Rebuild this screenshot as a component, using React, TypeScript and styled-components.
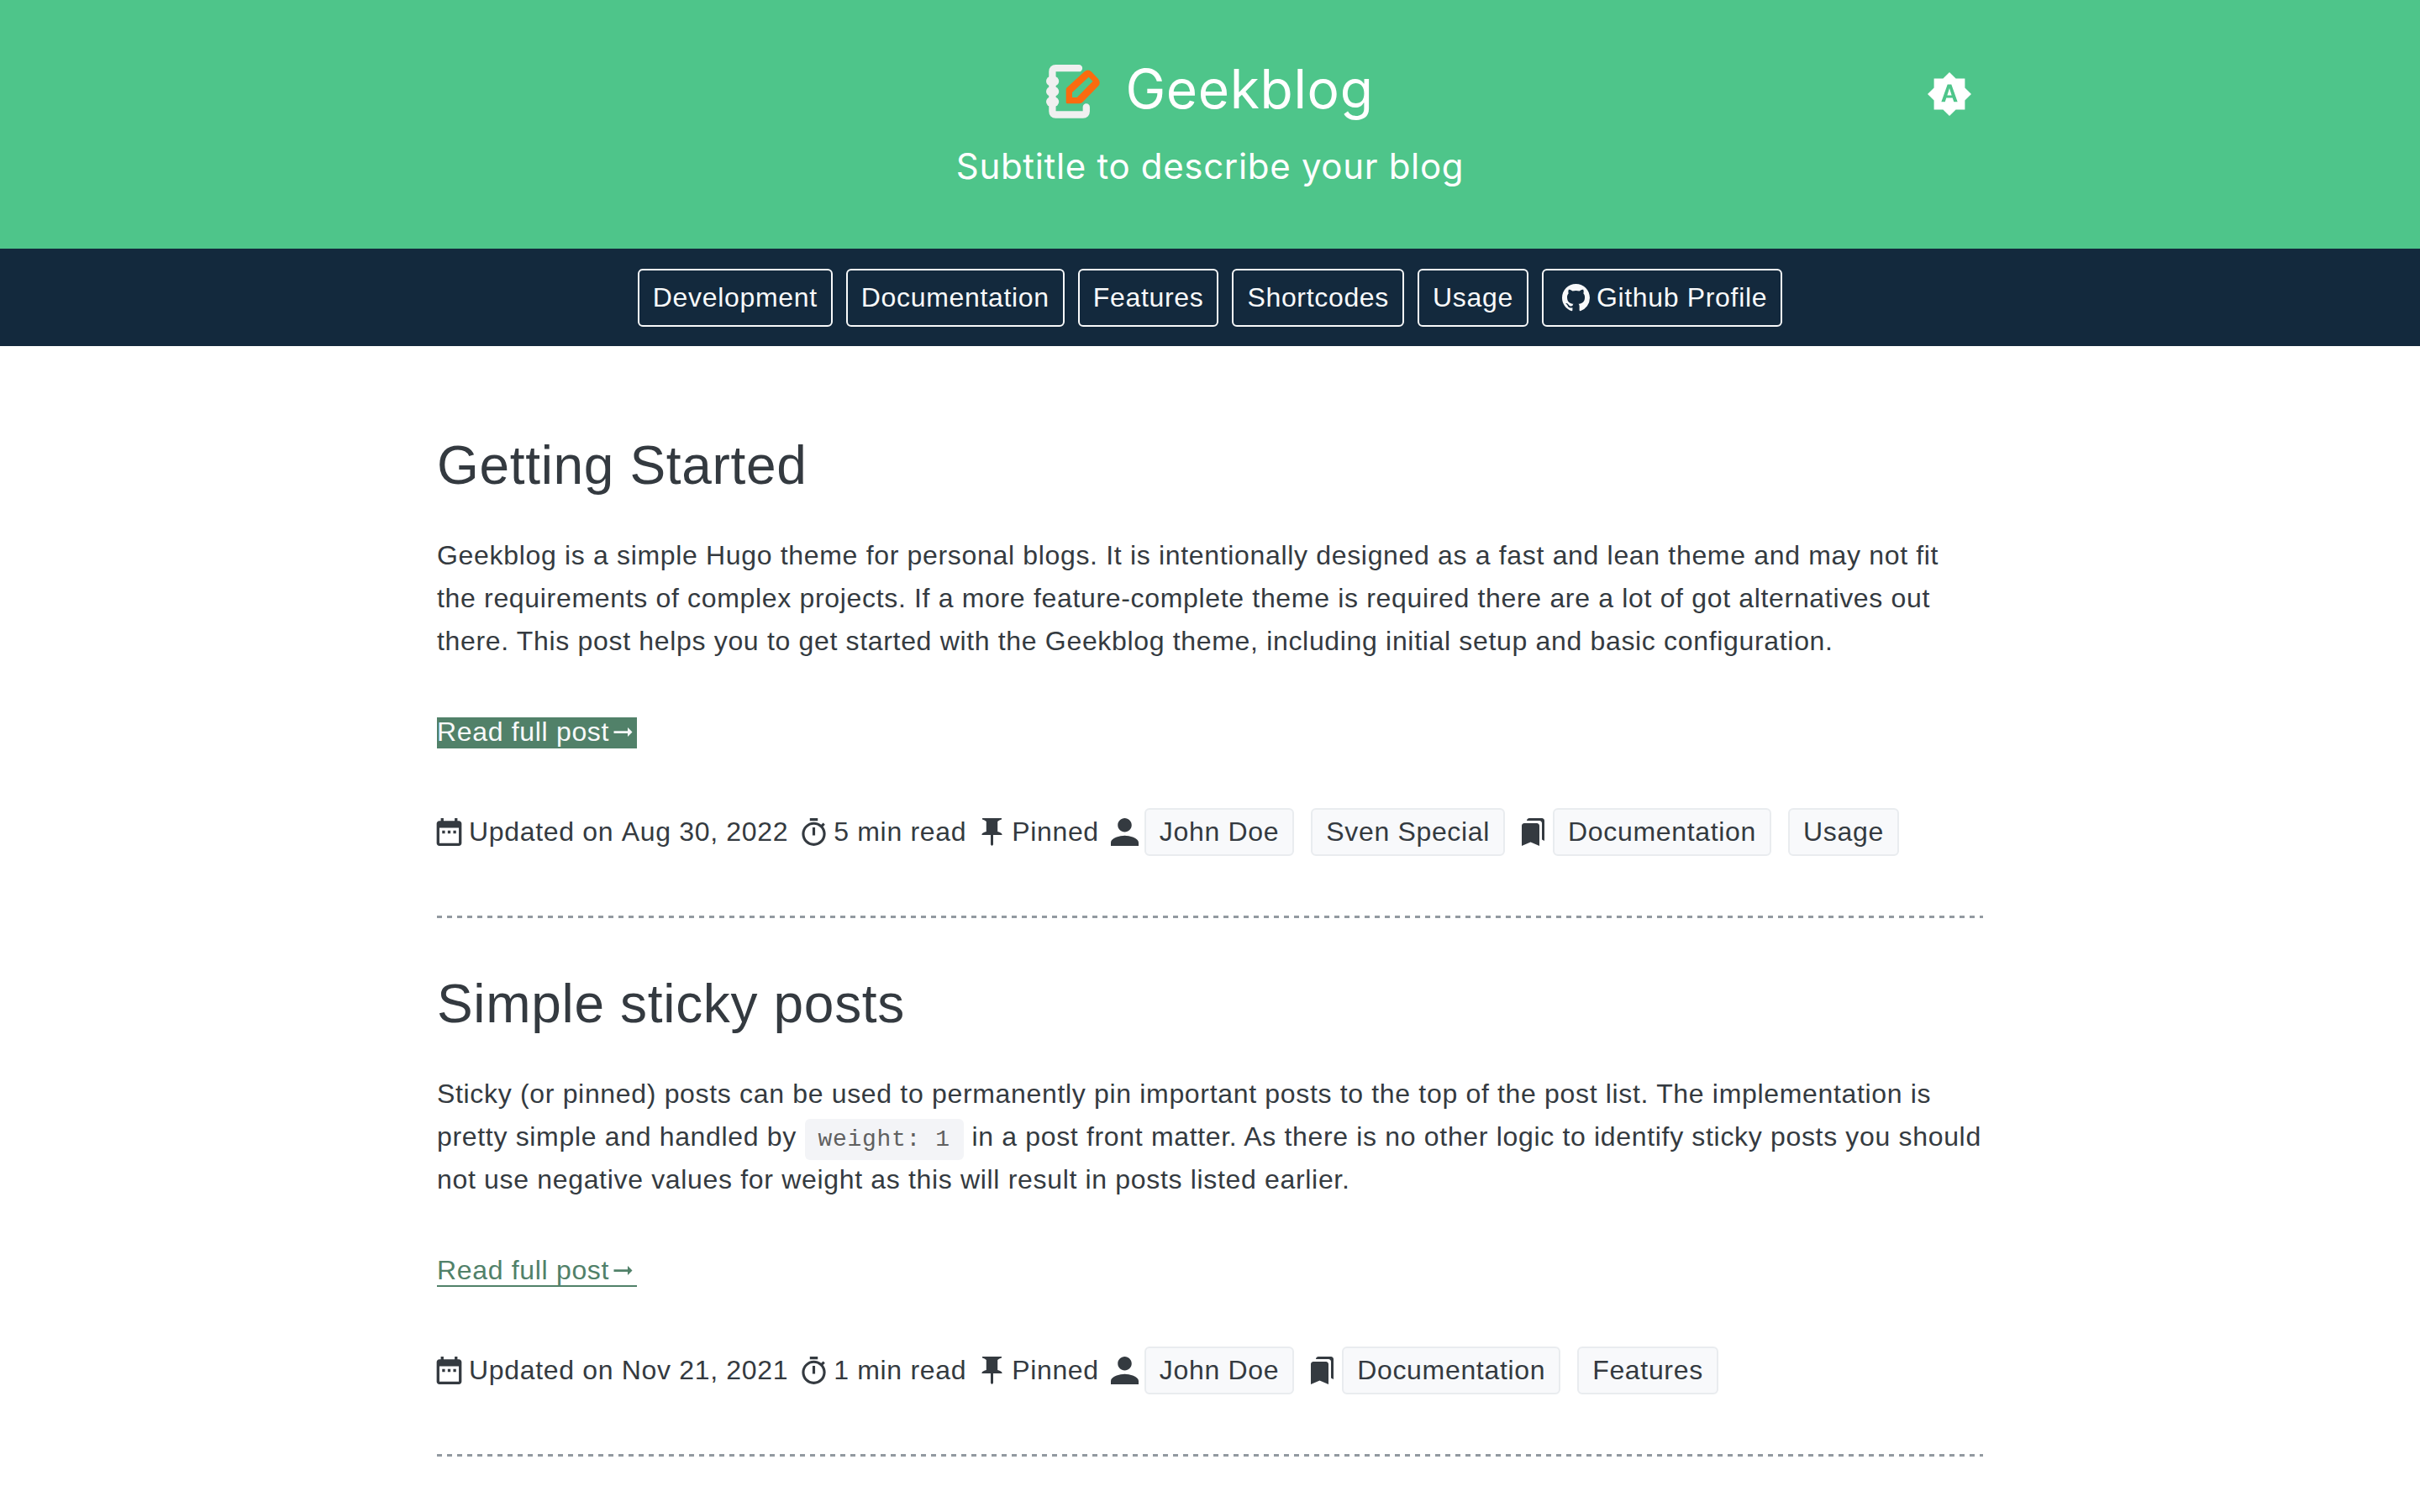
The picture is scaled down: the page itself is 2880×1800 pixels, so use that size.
import React from 'react';
import styled, { createGlobalStyle } from 'styled-components';

const GlobalStyle = createGlobalStyle`
  *, *::before, *::after { box-sizing: border-box; }
  body {
    margin: 0;
    background: #fff;
    color: #343a40;
    font-family: "Liberation Sans", Arial, sans-serif;
    font-size: 32px;
    line-height: 51px;
    letter-spacing: 0.021em;
  }
`;

const Header = styled.header`
  background: #4ec58a;
  color: #fff;
`;

const HeaderInner = styled.div`
  display: grid;
  grid-template-columns: 1fr auto 1fr;
  align-items: center;
  row-gap: 16px;
  width: 100%;
  max-width: 1904px;
  margin: 0 auto;
  padding: 64px 32px 70px;
`;

const BrandLink = styled.a`
  grid-column: 2;
  justify-self: center;
  display: flex;
  align-items: center;
  gap: 30px;
  color: #fff;
  text-decoration: none;
`;

const BrandName = styled.span`
  padding-bottom: 6px;
  font-family: Inter, "Open Sans", sans-serif;
  font-size: 64px;
  font-weight: 400;
  line-height: 84px;
`;

const Logo = styled.svg`
  display: block;
  flex: none;
  width: 64px;
  height: 64px;
`;

const Subtitle = styled.span`
  grid-column: 1 / -1;
  justify-self: center;
  font-family: Inter, "Open Sans", sans-serif;
  font-size: 42px;
  line-height: 56px;
`;

const ThemeToggle = styled.button`
  justify-self: end;
  display: flex;
  margin: 6px 14px 0 0;
  border: 0;
  padding: 0;
  background: none;
  color: #fff;
  cursor: pointer;
`;

const Nav = styled.nav`
  background: #13293d;
  padding: 24px 32px 23px;
`;

const NavList = styled.ul`
  display: flex;
  flex-wrap: wrap;
  justify-content: center;
  gap: 16px;
  margin: 0;
  padding: 0;
  list-style: none;
`;

const NavLink = styled.a`
  display: flex;
  align-items: center;
  border: 2px solid #f8f9fa;
  border-radius: 6px;
  padding: 7px 16px;
  color: #f8f9fa;
  text-decoration: none;

  svg {
    margin: 0 8px 0 6px;
  }
`;

const Main = styled.main`
  width: 100%;
  max-width: 1904px;
  margin: 0 auto;
  padding: 101px 32px 0;
`;

const Post = styled.article`
  margin-bottom: 61px;
`;

const Divider = styled.hr`
  height: 3px;
  margin: 71px 0 0;
  border: 0;
  background: repeating-linear-gradient(90deg, #9299a0 0 6px, transparent 6px 12px);
`;

const Title = styled.h1`
  margin: 0 0 41px;
  font-size: 64px;
  font-weight: 400;
  line-height: 82px;
`;

const Text = styled.p`
  margin: 0 0 57px;
`;

const Code = styled.code`
  border-radius: 6px;
  padding: 9px 16px;
  background: #f3f4f7;
  color: #606060;
  font-family: "Liberation Mono", monospace;
  font-size: 28px;
  line-height: 32px;
`;

const ReadMore = styled.p`
  margin: 0 0 65px;
`;

const ReadLink = styled.a<{ $active?: boolean }>`
  display: inline-flex;
  align-items: center;
  border-bottom: 2px solid #518169;
  background: ${(p) => (p.$active ? '#518169' : 'transparent')};
  color: ${(p) => (p.$active ? '#f8f9fa' : '#518169')};
  line-height: 35px;
  text-decoration: none;
`;

const Meta = styled.footer`
  display: flex;
  flex-wrap: wrap;
  align-items: center;
  gap: 14px;
  margin-left: -2px;
`;

const MetaItem = styled.span`
  display: flex;
  align-items: center;
  gap: 7px;
`;

const PostDate = styled.time`
  display: inline-block;
`;

const Tags = styled.span`
  display: flex;
  gap: 20px;
  padding-right: 3px;
`;

const Tag = styled.a`
  border: 2px solid #e9ecef;
  border-radius: 6px;
  padding: 1px 16px;
  background: #f8f9fb;
  color: #343a40;
  text-decoration: none;
`;

const Glyph = styled.svg<{ $size?: number }>`
  display: block;
  flex: none;
  width: ${(p) => p.$size ?? 33}px;
  height: ${(p) => p.$size ?? 33}px;
  fill: currentColor;
`;

const icons = {
  date: {
    box: '2 2 20 20',
    d: 'M9 11H7v2h2v-2zm4 0h-2v2h2v-2zm4 0h-2v2h2v-2zm2-7h-1V2h-2v2H8V2H6v2H5c-1.11 0-1.99.9-1.99 2L3 20c0 1.1.89 2 2 2h14c1.1 0 2-.9 2-2V6c0-1.1-.9-2-2-2zm0 16H5V9h14v11z',
  },
  timer: {
    box: '1.5 1 21 21',
    d: 'M15 1H9v2h6V1zm-4 13h2V8h-2v6zm8.03-6.61l1.42-1.42c-.43-.51-.9-.99-1.41-1.41l-1.42 1.42C16.07 4.74 14.12 4 12 4c-4.97 0-9 4.03-9 9s4.02 9 9 9 9-4.03 9-9c0-2.12-.74-4.07-1.97-5.61zM12 20c-3.87 0-7-3.13-7-7s3.13-7 7-7 7 3.13 7 7-3.13 7-7 7z',
  },
  pin: {
    box: '-4.5 0 33 33',
    d: 'M.5 0H23.5V1.5C21.5 2 20 3 18.7 4V16C21 16.5 23.5 17.5 24 19V20H13.5V31.5L12 33L10.5 31.5V20H0V19C.5 17.5 3 16.5 5.3 16V4C4 3 2.5 2 .5 1.5Z',
  },
  person: {
    box: '4 4 16 16',
    d: 'M12 12c2.21 0 4-1.79 4-4s-1.79-4-4-4-4 1.79-4 4 1.79 4 4 4zm0 2c-2.67 0-8 1.34-8 4v2h16v-2c0-2.66-5.33-4-8-4z',
  },
  bookmarks: {
    box: '1 1 22 22',
    d: 'M19 18l2 1V3c0-1.1-.9-2-2-2H8.99C7.89 1 7 1.9 7 3h10c1.1 0 2 .9 2 2v13zM15 5H5c-1.1 0-2 .9-2 2v16l7-3 7 3V7c0-1.1-.9-2-2-2z',
  },
  arrow: {
    box: '0 0 24 24',
    d: 'M16.01 11H4v2h12.01v3L20 12l-3.99-4z',
  },
  github: {
    box: '0 0 16 16',
    d: 'M8 0C3.58 0 0 3.58 0 8c0 3.54 2.29 6.53 5.47 7.59.4.07.55-.17.55-.38 0-.19-.01-.82-.01-1.49-2.01.37-2.53-.49-2.69-.94-.09-.23-.48-.94-.82-1.13-.28-.15-.68-.52-.01-.53.63-.01 1.08.58 1.23.82.72 1.21 1.87.87 2.33.66.07-.52.28-.87.51-1.07-1.78-.2-3.64-.89-3.64-3.95 0-.87.31-1.59.82-2.15-.08-.2-.36-1.02.08-2.12 0 0 .67-.21 2.2.82.64-.18 1.32-.27 2-.27s1.36.09 2 .27c1.53-1.04 2.2-.82 2.2-.82.44 1.1.16 1.92.08 2.12.51.56.82 1.27.82 2.15 0 3.07-1.87 3.75-3.65 3.95.29.25.54.73.54 1.48 0 1.07-.01 1.93-.01 2.2 0 .21.15.46.55.38A8.01 8.01 0 0 0 16 8c0-4.42-3.58-8-8-8z',
  },
  auto: {
    box: '.69 .69 22.62 22.62',
    d: 'M10.85 12.65h2.3L12 9l-1.15 3.65zM20 8.69V4h-4.69L12 .69 8.69 4H4v4.69L.69 12 4 15.31V20h4.69L12 23.31 15.31 20H20v-4.69L23.31 12 20 8.69zM14.3 16l-.7-2h-3.2l-.7 2H7.8L11 7h2l3.2 9h-1.9z',
  },
};

function Icon({ name, size }: { name: keyof typeof icons; size?: number }) {
  return (
    <Glyph viewBox={icons[name].box} $size={size} aria-hidden="true">
      <path d={icons[name].d} />
    </Glyph>
  );
}

function NotebookLogo() {
  return (
    <Logo viewBox="0 0 64 64" aria-hidden="true">
      <path
        d="M39 4.2H11.4Q7.4 4.2 7.4 8.2V55.5Q7.4 59.5 11.4 59.5H43.8Q47.8 59.5 47.8 55.5V50.5"
        fill="none"
        stroke="#f0f0f0"
        strokeWidth="8.3"
        strokeLinecap="round"
      />
      <g fill="#f0f0f0">
        <rect x="0" y="13.8" width="15.2" height="11.8" rx="5.9" />
        <rect x="0" y="26" width="15.2" height="11.8" rx="5.9" />
        <rect x="0" y="38.2" width="15.2" height="11.8" rx="5.9" />
      </g>
      <path
        fill="#fa6b0f"
        fillRule="evenodd"
        d="M23.7 44.8V29.5Q23.7 28.2 24.7 27.3L45.5 8.2Q50 4.8 54 8.6L62 17Q65.5 21.5 62 25.5L43.5 44.5Q42 46.3 39.5 46.3H25.2Q23.7 46.3 23.7 44.8ZM31 39V33L50.6 14.7L55.5 19.7L36.7 39Z"
      />
    </Logo>
  );
}

type PostMeta = { date: string; time: string; authors: string[]; tags: string[] };

function PostFooter({ date, time, authors, tags }: PostMeta) {
  return (
    <Meta>
      <MetaItem>
        <Icon name="date" />
        <span>
          Updated on <PostDate>{date}</PostDate>
        </span>
      </MetaItem>
      <MetaItem>
        <Icon name="timer" />
        <span>{time}</span>
      </MetaItem>
      <MetaItem>
        <Icon name="pin" />
        <span>Pinned</span>
      </MetaItem>
      <MetaItem>
        <Icon name="person" />
        <Tags>
          {authors.map((a) => (
            <Tag key={a} href="#">{a}</Tag>
          ))}
        </Tags>
      </MetaItem>
      <MetaItem>
        <Icon name="bookmarks" />
        <Tags>
          {tags.map((t) => (
            <Tag key={t} href="#">{t}</Tag>
          ))}
        </Tags>
      </MetaItem>
    </Meta>
  );
}

function ReadFullPost({ active }: { active?: boolean }) {
  return (
    <ReadMore>
      <ReadLink href="#" $active={active}>
        Read full post
        <Icon name="arrow" />
      </ReadLink>
    </ReadMore>
  );
}

const sections = ['Development', 'Documentation', 'Features', 'Shortcodes', 'Usage'];

export default function App() {
  return (
    <>
      <GlobalStyle />
      <Header>
        <HeaderInner>
          <BrandLink href="#">
            <NotebookLogo />
            <BrandName>Geekblog</BrandName>
          </BrandLink>
          <ThemeToggle type="button" aria-label="Toggle dark mode">
            <Icon name="auto" size={52} />
          </ThemeToggle>
          <Subtitle>Subtitle to describe your blog</Subtitle>
        </HeaderInner>
      </Header>
      <Nav>
        <NavList>
          {sections.map((name) => (
            <li key={name}>
              <NavLink href="#">{name}</NavLink>
            </li>
          ))}
          <li>
            <NavLink href="#">
              <Icon name="github" />
              Github Profile
            </NavLink>
          </li>
        </NavList>
      </Nav>
      <Main>
        <Post>
          <Title>Getting Started</Title>
          <Text>
            Geekblog is a simple Hugo theme for personal blogs. It is intentionally designed as a fast and lean theme and
            may not fit the requirements of complex projects. If a more feature-complete theme is required there are a lot
            of got alternatives out there. This post helps you to get started with the Geekblog theme, including initial
            setup and basic configuration.
          </Text>
          <ReadFullPost active />
          <PostFooter
            date="Aug 30, 2022"
            time="5 min read"
            authors={['John Doe', 'Sven Special']}
            tags={['Documentation', 'Usage']}
          />
          <Divider />
        </Post>
        <Post>
          <Title>Simple sticky posts</Title>
          <Text>
            Sticky (or pinned) posts can be used to permanently pin important posts to the top of the post list. The
            implementation is pretty simple and handled by <Code>weight: 1</Code> in a post front matter. As there is no
            other logic to identify sticky posts you should not use negative values for weight as this will result in
            posts listed earlier.
          </Text>
          <ReadFullPost />
          <PostFooter
            date="Nov 21, 2021"
            time="1 min read"
            authors={['John Doe']}
            tags={['Documentation', 'Features']}
          />
          <Divider />
        </Post>
      </Main>
    </>
  );
}
